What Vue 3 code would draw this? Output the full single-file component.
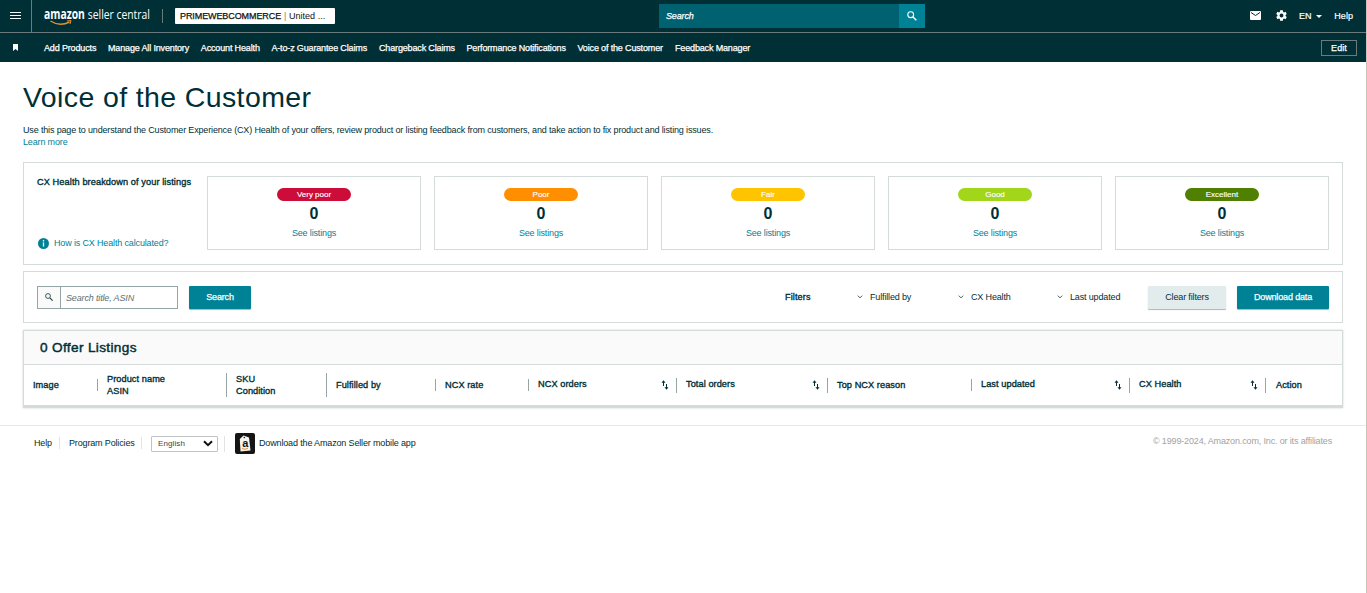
<template>
  <div class="page">
    <header class="topbar">
      <button class="menu" aria-label="Menu">
        <svg width="11" height="8" viewBox="0 0 11 8">
          <path d="M0 .5h11M0 3.5h11M0 6.5h11" stroke="#fff" />
        </svg>
      </button>
      <svg class="logo" width="112" height="22" viewBox="0 0 112 22">
        <text class="logo-bold" transform="translate(0 14) scale(.767 1)">amazon</text>
        <text class="logo-light" transform="translate(43.800 14) scale(.767 1)">seller central</text>
        <path d="M6.500 16Q15.500 22 25.500 17" fill="none" stroke="#e8912d" stroke-width="1.400" />
        <path d="M23 16l4-.5-1 3.500" fill="none" stroke="#e8912d" />
      </svg>
      <span class="logo-divider" />
      <div class="account"><b>PRIMEWEBCOMMERCE</b> <i>|</i> <span>United ...</span></div>
      <div class="top-search">
        <span class="top-search-input">Search</span>
        <button class="top-search-btn" aria-label="Search">
          <svg width="10" height="10" viewBox="0 0 10 10" fill="none" stroke="#fff">
            <circle cx="3.700" cy="3.700" r="2.900" stroke-width="1.100" />
            <path d="M5.800 5.800L9.300 9.300" stroke-width="1.500" />
          </svg>
        </button>
      </div>
      <div class="top-links">
        <svg class="mail" width="11" height="9" viewBox="0 0 11 9">
          <rect width="11" height="9" rx="1" fill="#fff" />
          <path d="M1 1.500l4.500 3 4.500-3" fill="none" stroke="#002f36" />
        </svg>
        <svg class="gear" width="13" height="13" viewBox="0 0 24 24">
          <path
            fill="#fff"
            d="M19.400 13a7.500 7.500 0 0 0 0-2l2.300-1.700-2.300-4-2.700 1.100a7.500 7.500 0 0 0-1.700-1L14.600 2.500H9.400L9 5.400a7.500 7.500 0 0 0-1.700 1L4.600 5.300l-2.300 4L4.600 11a7.500 7.500 0 0 0 0 2l-2.300 1.700 2.300 4 2.700-1.100a7.500 7.500 0 0 0 1.700 1l.4 2.900h5.200l.4-2.900a7.500 7.500 0 0 0 1.700-1l2.700 1.100 2.300-4zM12 15.600a3.600 3.600 0 1 1 0-7.200 3.600 3.600 0 0 1 0 7.200z"
          />
        </svg>
        <span class="lang">EN</span>
        <span class="caret" />
        <span class="help">Help</span>
      </div>
    </header>

    <nav class="favbar">
      <svg class="bookmark" width="5" height="7" viewBox="0 0 5 7">
        <path d="M0 0h5v7L2.500 5 0 7z" fill="#fff" />
      </svg>
      <a v-for="item in favorites" :key="item.label" :style="{ width: `${item.width}px` }">{{ item.label }}</a>
      <button class="edit">Edit</button>
    </nav>

    <main>
      <h1>Voice of the Customer</h1>
      <p class="intro">
        Use this page to understand the Customer Experience (CX) Health of your offers, review product or listing feedback from customers, and take action to fix product and listing issues.
      </p>
      <a class="learn">Learn more</a>

      <section class="box health">
        <div class="health-info">
          <h2>CX Health breakdown of your listings</h2>
          <a class="how">
            <svg width="11" height="11" viewBox="0 0 11 11">
              <circle cx="5.500" cy="5.500" r="5.500" fill="#008296" />
              <path d="M5.500 2v1.500M5.500 4.500v4" stroke="#fff" stroke-width="1.300" />
            </svg>
            <span>How is CX Health calculated?</span>
          </a>
        </div>
        <div v-for="card in cards" :key="card.label" class="card">
          <span class="pill" :class="card.type">{{ card.label }}</span>
          <strong>0</strong>
          <a>See listings</a>
        </div>
      </section>

      <section class="box filters">
        <div class="search-field">
          <span class="search-icon">
            <svg width="8" height="8" viewBox="0 0 8 8" fill="none" stroke="#23494f">
              <circle cx="3" cy="3" r="2.400" stroke-width=".9" />
              <path d="M4.800 4.800L7.600 7.600" stroke-width="1.200" />
            </svg>
          </span>
          <span class="placeholder">Search title, ASIN</span>
        </div>
        <button class="btn primary search-btn">Search</button>
        <b class="filters-label">Filters</b>
        <div v-for="f in filters" :key="f.label" class="filter" :style="{ width: `${f.width}px` }">
          <svg width="6" height="4" viewBox="0 0 6 4">
            <path d="M.7.7L3 2.800 5.300.7" fill="none" stroke="#4c686c" />
          </svg>
          <span>{{ f.label }}</span>
        </div>
        <button class="btn secondary">Clear filters</button>
        <button class="btn primary download">Download data</button>
      </section>

      <section class="listings">
        <h3>0 Offer Listings</h3>
        <div class="columns">
          <div
            v-for="col in columns"
            :key="col.label"
            class="col"
            :class="{ sortable: col.sort }"
            :style="{ width: `${col.width}px` }"
          >
            <span>{{ col.label }}<template v-if="col.sub"><br />{{ col.sub }}</template></span>
            <svg v-if="col.sort" width="8" height="10" viewBox="0 0 8 10">
              <path d="M2.500 6V1M5.500 4v5" fill="none" stroke="#002f36" />
              <path d="M.5 2.800L2.500.3l2 2.500zM3.500 7.200l2 2.500 2-2.500z" fill="#002f36" />
            </svg>
          </div>
        </div>
      </section>
    </main>

    <footer>
      <a class="f-help">Help</a>
      <a class="f-policies">Program Policies</a>
      <div class="f-lang">
        <div class="select">
          <span>English</span>
          <svg width="10" height="7" viewBox="0 0 10 7">
            <path d="M1 1.200l4 4 4-4" fill="none" stroke="#111" stroke-width="2" />
          </svg>
        </div>
      </div>
      <svg class="app-icon" width="20" height="21" viewBox="0 0 20 21">
        <rect width="20" height="21" rx="2" fill="#151515" />
        <path d="M4.800 6L8.500 2.500l5.500 2 1.500 13-10 1z" fill="#f7f4ee" />
        <circle cx="9.300" cy="4.500" r=".8" fill="#151515" />
        <text x="10.200" y="14" text-anchor="middle" class="app-letter">a</text>
        <path d="M7 15.600q3.200 1.500 6-.4" fill="none" stroke="#e8912d" />
      </svg>
      <a class="f-app">Download the Amazon Seller mobile app</a>
      <span class="copyright">© 1999-2024, Amazon.com, Inc. or its affiliates</span>
    </footer>
  </div>
</template>

<script setup>
const favorites = [
  { label: 'Add Products', width: 64 },
  { label: 'Manage All Inventory', width: 92.8 },
  { label: 'Account Health', width: 70.6 },
  { label: 'A-to-z Guarantee Claims', width: 107.6 },
  { label: 'Chargeback Claims', width: 87.5 },
  { label: 'Performance Notifications', width: 111 },
  { label: 'Voice of the Customer', width: 97.5 },
  { label: 'Feedback Manager', width: 90 },
]

const cards = [
  { label: 'Very poor', type: 'very-poor' },
  { label: 'Poor', type: 'poor' },
  { label: 'Fair', type: 'fair' },
  { label: 'Good', type: 'good' },
  { label: 'Excellent', type: 'excellent' },
]

const filters = [
  { label: 'Fulfilled by', width: 101 },
  { label: 'CX Health', width: 99 },
  { label: 'Last updated', width: 91 },
]

const columns = [
  { label: 'Image', width: 74 },
  { label: 'Product name', sub: 'ASIN', width: 129 },
  { label: 'SKU', sub: 'Condition', width: 100 },
  { label: 'Fulfilled by', width: 109 },
  { label: 'NCX rate', width: 93 },
  { label: 'NCX orders', width: 148, sort: true },
  { label: 'Total orders', width: 151, sort: true },
  { label: 'Top NCX reason', width: 144 },
  { label: 'Last updated', width: 158, sort: true },
  { label: 'CX Health', width: 136, sort: true },
  { label: 'Action', width: 76 },
]
</script>

<style>
body {
  background: #fff;
}
</style>

<style scoped>
* {
  box-sizing: border-box;
}

.page {
  height: 593px;
  border-right: 1px solid #c5c8b8;
  font: 9px/12px 'Liberation Sans', Arial, sans-serif;
  letter-spacing: -0.150px;
  color: #002f36;
  overflow: hidden;
  white-space: nowrap;
}

button {
  font: inherit;
  letter-spacing: inherit;
  color: inherit;
  border: 0;
  padding: 0;
  background: none;
}

h1,
h2,
h3,
p {
  margin: 0;
}

a {
  color: #008296;
}

/* top bar */
.topbar {
  display: flex;
  align-items: center;
  height: 33px;
  padding-bottom: 1px;
  border-bottom: 1px solid #6b7b7d;
  background: #002f36;
  color: #fff;
}

.menu {
  width: 32px;
  height: 32px;
  border-right: 1px solid #6b7b7d;
  margin-bottom: -1px;
}

.menu svg {
  display: block;
  margin: 0 auto;
}

.logo {
  margin: 1px 0 0 12px;
}

.logo text {
  font-family: 'Open Sans', sans-serif;
  font-size: 13.500px;
  letter-spacing: 0;
  fill: #fff;
}

.logo .logo-bold {
  font-weight: 700;
}

.logo-divider {
  width: 1px;
  height: 14px;
  margin-left: 6px;
  background: #6b7b7d;
}

.account {
  width: 160px;
  height: 16px;
  margin-left: 12px;
  padding-left: 5px;
  border-radius: 1px;
  background: #fff;
  color: #111;
  line-height: 16px;
  letter-spacing: 0;
  word-spacing: 0.300px;
}

.account b {
  font-weight: 400;
  letter-spacing: -0.090px;
  -webkit-text-stroke: 0.25px #111;
}

.account i {
  color: #a07a50;
  font-style: normal;
}

.top-search {
  display: flex;
  width: 266px;
  height: 24px;
  margin-left: 324px;
}

.top-search-input {
  flex: 1;
  padding-left: 7px;
  background: #006170;
  font-style: italic;
  line-height: 24px;
  -webkit-text-stroke: 0.25px #fff;
}

.top-search-btn {
  width: 26px;
  background: #008296;
}

.top-search-btn svg {
  display: block;
  margin: 0 auto;
}

.top-links {
  display: flex;
  align-items: center;
  margin-left: 325px;
  letter-spacing: 0.100px;
  -webkit-text-stroke: 0.2px #fff;
}

.gear {
  margin-left: 14px;
}

.lang {
  margin-left: 11px;
}

.caret {
  margin: 1px 0 0 4px;
  border: 3px solid transparent;
  border-top-color: #fff;
  border-bottom: 0;
}

.help {
  margin-left: 12.500px;
}

/* favorites bar */
.favbar {
  display: flex;
  align-items: center;
  height: 29px;
  padding-left: 13px;
  background: #002f36;
}

.favbar a {
  color: #fff;
  -webkit-text-stroke: 0.25px #fff;
}

.bookmark {
  margin-right: 26px;
}

.edit {
  width: 36px;
  height: 16px;
  margin-left: auto;
  margin-right: 9px;
  border: 1px solid #6b7b7d;
  color: #fff;
  letter-spacing: 0.100px;
  -webkit-text-stroke: 0.25px #fff;
}

/* content */
main {
  padding: 17px 23px 0;
}

h1 {
  font-size: 28.500px;
  font-weight: 400;
  line-height: 36px;
  letter-spacing: 0.380px;
}

.intro {
  margin-top: 9px;
  letter-spacing: -0.153px;
}

.learn {
  display: block;
}

.box {
  display: flex;
  border: 1px solid #d5dbdb;
}

.health {
  height: 103px;
  margin-top: 14px;
  padding: 13px;
  gap: 13px;
}

.health-info {
  display: flex;
  flex-direction: column;
  justify-content: space-between;
  width: 157px;
  height: 73px;
}

h2 {
  font-size: 9.200px;
  line-height: 12px;
  font-weight: 400;
  letter-spacing: 0.095px;
  -webkit-text-stroke: 0.35px #002f36;
}

.how {
  display: flex;
  align-items: center;
  gap: 5px;
  padding-left: 1px;
}

.card {
  display: flex;
  flex-direction: column;
  align-items: center;
  width: 214px;
  height: 74px;
  padding-top: 11px;
  border: 1px solid #d5dbdb;
}

.pill {
  width: 74px;
  height: 13px;
  border-radius: 7px;
  color: #fff;
  font-size: 8px;
  line-height: 13px;
  letter-spacing: 0;
  text-align: center;
  -webkit-text-stroke: 0.15px #fff;
}

.very-poor {
  background: #cc0c39;
}

.poor {
  background: #ff8f00;
}

.fair {
  background: #ffc400;
}

.good {
  background: #a2d61b;
}

.excellent {
  background: #508000;
}

.card strong {
  margin-top: 4px;
  font-size: 16px;
  line-height: 18px;
  letter-spacing: 0;
}

.card a {
  margin-top: 4px;
}

/* filters */
.filters {
  align-items: center;
  height: 52px;
  margin-top: 6px;
  padding-left: 13px;
}

.search-field {
  display: flex;
  width: 141px;
  height: 23px;
  border: 1px solid #95a5a6;
}

.search-icon {
  display: flex;
  align-items: center;
  justify-content: center;
  width: 23px;
  border-right: 1px solid #95a5a6;
  background: #fafafa;
}

.placeholder {
  padding-left: 5px;
  color: #5c6f72;
  font-style: italic;
  line-height: 22px;
}

.btn {
  height: 23px;
  border-radius: 1px;
  box-shadow: 0 1px 1px rgba(0, 0, 0, 0.3);
}

.primary {
  background: #008296;
  color: #fff;
  -webkit-text-stroke: 0.25px #fff;
}

.search-btn {
  width: 62px;
  margin-left: 11px;
}

.filters-label {
  width: 72px;
  margin-left: 534px;
  font-weight: 400;
  letter-spacing: 0.150px;
  -webkit-text-stroke: 0.35px #002f36;
}

.filter {
  display: flex;
  align-items: center;
  gap: 7px;
}

.secondary {
  width: 78px;
  background: #e3eced;
}

.download {
  width: 92px;
  margin-left: 11px;
}

/* listings table */
.listings {
  height: 78px;
  margin-top: 7px;
  border: 1px solid #d5dbdb;
  border-bottom-width: 3px;
  box-shadow: 0 0 2px rgba(0, 0, 0, 0.18);
}

h3 {
  height: 34px;
  padding-left: 16px;
  border-bottom: 1px solid #d5dbdb;
  background: #fafafa;
  font-size: 13.600px;
  font-weight: 400;
  line-height: 33px;
  letter-spacing: 0.350px;
  -webkit-text-stroke: 0.45px #002f36;
}

.columns {
  display: flex;
  align-items: center;
  height: 40px;
}

.col {
  display: flex;
  align-items: center;
  justify-content: space-between;
  padding: 0 7px 0 9px;
  border-right: 1px solid #95a5a6;
  font-size: 9.200px;
  letter-spacing: 0.070px;
  -webkit-text-stroke: 0.35px #002f36;
}

.col:last-child {
  border-right: 0;
  padding-left: 10px;
}

.sortable {
  height: 15px;
  padding-bottom: 2px;
}

.sortable svg {
  margin-top: 2px;
}

/* footer */
footer {
  display: flex;
  align-items: center;
  height: 36px;
  margin-top: 17px;
  padding: 0 34px;
  border-top: 1px solid #e7e9e9;
}

footer a {
  margin-top: -1px;
  color: #002f36;
}

.f-help {
  width: 26px;
  border-right: 1px solid #e1e4e4;
}

.f-policies {
  width: 82px;
  padding-left: 9px;
  border-right: 1px solid #e1e4e4;
}

.f-lang {
  width: 83px;
  padding-left: 9px;
  border-right: 1px solid #e1e4e4;
}

.select {
  display: flex;
  align-items: center;
  justify-content: space-between;
  width: 67px;
  height: 16px;
  padding: 0 4px 0 6px;
  border: 1px solid #bfc3c3;
  border-radius: 1px;
  font-size: 8px;
  letter-spacing: 0.100px;
  color: #444;
}

.app-icon {
  margin-left: 10px;
}

.app-letter {
  font: bold 11px 'Liberation Sans', Arial, sans-serif;
  fill: #151515;
}

.f-app {
  margin-left: 4px;
}

.copyright {
  margin: -5px 0 0 auto;
  color: #a0a3a3;
}
</style>
